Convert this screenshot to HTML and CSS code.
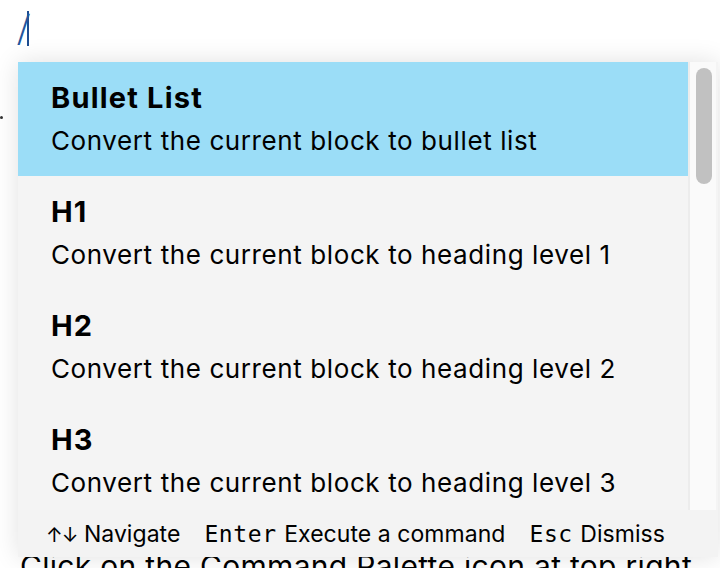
FILE: index.html
```html
<!DOCTYPE html>
<html>
<head>
<meta charset="utf-8">
<link rel="stylesheet" href="styles.css">
</head>
<body>
<div class="page">
  <div class="editor-line"><span class="slash">/</span><span class="caret"></span></div>
  <div class="bullet-dot"></div>
  <p class="page-text">Click on the Command Palette icon at top right</p>
</div>

<div class="popup">
  <div class="list-wrap">
    <div class="items">
      <div class="item active">
        <div class="title">Bullet List</div>
        <div class="desc">Convert the current block to bullet list</div>
      </div>
      <div class="item">
        <div class="title">H1</div>
        <div class="desc">Convert the current block to heading level 1</div>
      </div>
      <div class="item">
        <div class="title">H2</div>
        <div class="desc">Convert the current block to heading level 2</div>
      </div>
      <div class="item">
        <div class="title">H3</div>
        <div class="desc">Convert the current block to heading level 3</div>
      </div>
    </div>
    <div class="scrollbar"><div class="thumb"></div></div>
  </div>
  <div class="footer">
    <span class="hint"><span class="arrows">↑↓</span> Navigate</span>
    <span class="hint"><span class="key">Enter</span> Execute a command</span>
    <span class="hint"><span class="key">Esc</span> Dismiss</span>
  </div>
</div>
</body>
</html>
```

FILE: styles.css
```css
html, body {
  margin: 0;
  padding: 0;
  background: #ffffff;
  overflow: hidden;
}
body {
  width: 720px;
  height: 568px;
  font-family: Inter, "Noto Sans", sans-serif;
  color: #000;
  position: relative;
}
.page {
  padding: 8px 18px 0 20px;
}
.editor-line {
  height: 40px;
  display: flex;
  align-items: center;
  margin-left: -3px;
}
.slash {
  font-size: 36px;
  line-height: 40px;
  color: #24569c;
  font-weight: 400;
  font-style: italic;
  transform: scaleX(0.75);
}
.caret {
  width: 2px;
  height: 35px;
  background: #1d4d91;
  margin-left: -3px;
}
.bullet-dot {
  width: 3px;
  height: 3px;
  background: #333;
  border-radius: 50%;
  margin: 68px 0 0 -20px;
}
.page-text {
  margin: 430px 0 0 0;
  font-size: 30px;
  line-height: 34px;
  letter-spacing: 0.3px;
  white-space: nowrap;
}
.popup {
  position: absolute;
  left: 18px;
  top: 62px;
  width: 700px;
  height: 495px;
  display: flex;
  flex-direction: column;
  background: #f4f4f4;
  box-shadow: 0 0 24px rgba(0, 0, 0, 0.12);
}
.list-wrap {
  height: 448px;
  display: flex;
  overflow: hidden;
}
.items {
  width: 670px;
  display: flex;
  flex-direction: column;
}
.item {
  flex: none;
  height: 114px;
  box-sizing: border-box;
  padding: 17px 33px 0 33px;
  background: #f4f4f4;
}
.item.active {
  background: #9bddf7;
}
.title {
  font-weight: 700;
  font-size: 29px;
  line-height: 38px;
  letter-spacing: 1.2px;
}
.desc {
  font-size: 26px;
  line-height: 38px;
  margin-top: 5px;
  letter-spacing: 0.6px;
  white-space: nowrap;
}
.scrollbar {
  width: 28px;
  background: #fafafa;
  border-left: 2px solid #ececec;
  box-sizing: border-box;
  padding: 6px 4px 0 6px;
}
.thumb {
  width: 16px;
  height: 116px;
  border-radius: 8px;
  background: #c1c1c1;
}
.footer {
  flex: 1;
  display: flex;
  align-items: center;
  gap: 24px;
  padding: 0 0 0 28px;
  background: #f3f3f3;
  font-size: 23px;
  letter-spacing: 0.05px;
}
.hint {
  white-space: nowrap;
}
.arrows {
  font-size: 20px;
  letter-spacing: -1px;
}
.key {
  font-family: "DejaVu Sans Mono", "Liberation Mono", monospace;
  font-size: 23px;
  letter-spacing: 0.6px;
  margin-right: 1px;
}
```
